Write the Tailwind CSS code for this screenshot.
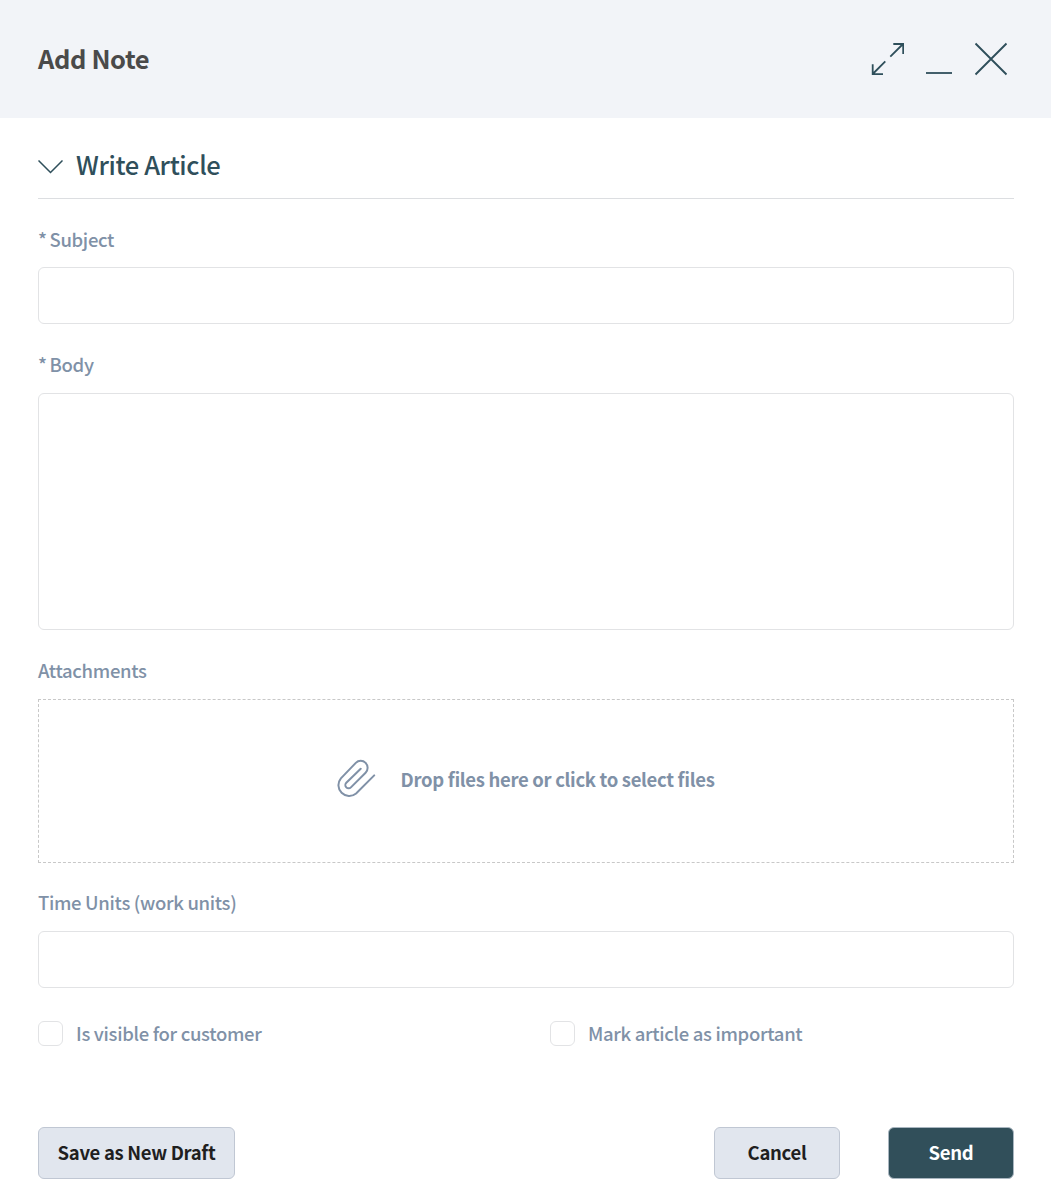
<!DOCTYPE html>
<html lang="en">
<head>
<meta charset="utf-8">
<title>Add Note</title>
<script src="https://cdn.jsdelivr.net/npm/@tailwindcss/browser@4"></script>
</head>
<body class="h-[1185px] overflow-hidden bg-white font-['Noto_Sans_CJK_SC','Noto_Sans',sans-serif] text-[18.5px] font-medium tracking-[-0.32px] text-[#8091a7] [font-feature-settings:'liga']">
<header class="flex h-[118px] items-center justify-between bg-[#f2f4f8] pl-[38px] pr-[43px]">
  <h1 class="pb-[2px] text-[25.5px] leading-[36px] font-bold tracking-[-0.4px] text-[#4a4a4a]">Add Note</h1>
  <div class="flex items-center gap-[21px] text-[#2f4f5b]">
    <svg class="h-[34px] w-[34px]" viewBox="0 0 34 34" fill="none" stroke="currentColor" stroke-width="1.800"><path d="M20.300 14.700 33 2M23.300 2H33.200V12M15.300 19.300 2.700 32M2.700 22.300V32.100H13"/></svg>
    <svg class="h-[34px] w-[28px]" viewBox="0 0 28 34" fill="none" stroke="currentColor" stroke-width="1.800"><path d="M1 31H27"/></svg>
    <svg class="h-[34px] w-[34px]" viewBox="0 0 34 34" fill="none" stroke="currentColor" stroke-width="1.900"><path d="M1.500 1.500 32.500 32.500M32.500 1.500 1.500 32.500"/></svg>
  </div>
</header>
<main class="pl-[38px] pr-[37px]">
  <h2 class="flex h-[81px] items-center gap-[13px] border-b border-[#dcdee1] pt-[14px] text-[25.5px] leading-[36px] tracking-[-0.38px] text-[#2f4f5b]">
    <svg class="mt-[3px] h-[14px] w-[25px]" viewBox="0 0 25 14" fill="none" stroke="currentColor" stroke-width="1.500"><path d="M.5.500 12.500 12.500 24.500.500"/></svg>
    <span class="pb-[2px]">Write Article</span>
  </h2>
  <label class="mt-[26px] block h-[42px] leading-[28px] [word-spacing:-1px]">* Subject</label>
  <div class="h-[57px] rounded-md border border-[#e2e3e5]"></div>
  <label class="mt-[26px] block h-[43px] leading-[28px] [word-spacing:-1px]">* Body</label>
  <div class="h-[237px] rounded-md border border-[#e2e3e5]"></div>
  <label class="mt-[26px] block h-[43px] leading-[28px]">Attachments</label>
  <div class="flex h-[164px] items-center justify-center gap-[25px] border border-dashed border-[#c8c8c8] pr-[2px] pb-[4px] font-bold">
    <svg class="h-[40px] w-[40px]" viewBox="0 0 40 40" fill="none" stroke="currentColor" stroke-width="2" stroke-linecap="round"><path d="M38.200 16.400 20.100 34.500A10.800 10.800 0 0 1 4.900 19.300L19.800 3.900A6.900 6.900 0 0 1 29.600 13.700L14.900 28.400A3.250 3.250 0 0 1 10.300 23.800L24.700 9.800"/></svg>
    <span class="pt-[2px]">Drop files here or click to select files</span>
  </div>
  <label class="mt-[25px] block h-[43px] leading-[28px]">Time Units (work units)</label>
  <div class="h-[57px] rounded-md border border-[#e2e3e5]"></div>
  <div class="mt-[33px] grid grid-cols-2 gap-x-[48px]">
    <div class="flex items-center gap-[13px] leading-[25px]"><span class="size-[25px] rounded-md border border-[#e2e3e5]"></span><span>Is visible for customer</span></div>
    <div class="flex items-center gap-[13px] leading-[25px]"><span class="size-[25px] rounded-md border border-[#e2e3e5]"></span><span>Mark article as important</span></div>
  </div>
  <div class="mt-[81px] flex items-center font-bold text-[#1f1f1f]">
    <button class="h-[52px] w-[197px] rounded-md border border-[#c0c7d3] bg-[#e1e6ee]">Save as New Draft</button>
    <button class="ml-auto h-[52px] w-[126px] rounded-md border border-[#c0c7d3] bg-[#e1e6ee]">Cancel</button>
    <button class="ml-[48px] h-[52px] w-[126px] rounded-md border border-[#a9b6c0] bg-[#314f5a] text-white">Send</button>
  </div>
</main>
</body>
</html>
